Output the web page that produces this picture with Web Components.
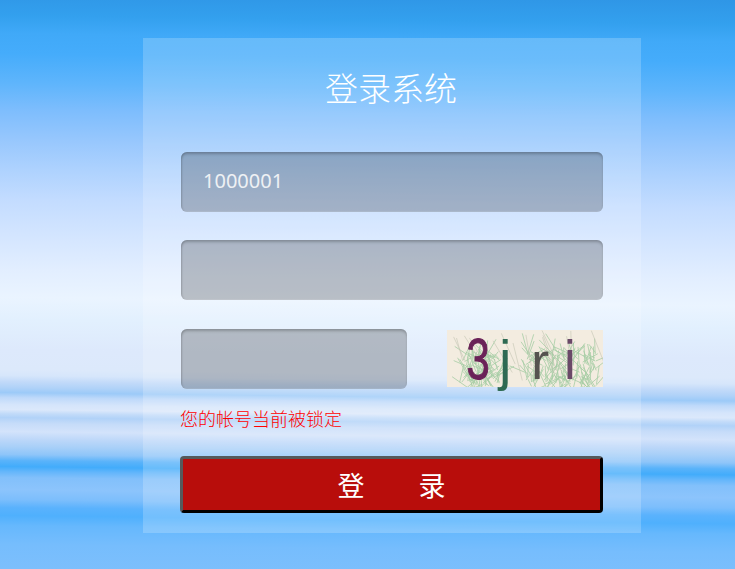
<!DOCTYPE html>
<html lang="zh">
<head>
<meta charset="utf-8">
<title>登录系统</title>
<style>
html,body{margin:0;padding:0;height:100%}
body{font-family:"Noto Sans","Noto Sans CJK SC",sans-serif}
</style>
</head>
<body>
<login-page>
  <login-card>
    <span slot="title">登录系统</span>
    <login-field>1000001</login-field>
    <login-field></login-field>
    <login-captcha-row slot="captcha"></login-captcha-row>
    <span slot="error">您的帐号当前被锁定</span>
    <login-button slot="button">登&emsp;&emsp;录</login-button>
  </login-card>
</login-page>
<script>
function el(html){const t=document.createElement('template');t.innerHTML=html;return t;}
function define(name,html){
  const tpl=el(html);
  customElements.define(name,class extends HTMLElement{
    constructor(){super();this.attachShadow({mode:'open'}).appendChild(tpl.content.cloneNode(true));}
  });
}
define('login-page',`<style>
:host{display:block;box-sizing:border-box;width:735px;height:569px;overflow:hidden;padding:38px 94px 36px 143px;
background:linear-gradient(180.67deg,
#2f96e6 0,#33a0ee 24px,#40a9f8 42px,#45acfb 62px,#5fb5fc 92px,#7dbdfd 118px,#97c7fd 148px,#aed2fe 178px,#c3dcff 208px,#d3e5ff 243px,#e2eeff 278px,#eaf4ff 306px,
#e2f0fe 328px,#dde9fc 358px,#dce9fb 378px,#d6e6fb 384px,#c2daf9 390px,#b0d2f8 396px,#9ccaf8 401px,#bed9fa 406px,#d5e5fb 413px,#dbe8fb 418px,#c2dbf9 422px,#b1d2f8 426px,#c6dcf9 432px,#d3e3fb 440px,#bcd7f9 448px,#a9d0f8 455px,#8ec5f9 463px,#5ab3fa 469px,#42acfb 475px,#64b6fb 480px,#82c0fb 486px,#8cc4fc 498px,#7cbefc 508px,#5ab2fd 516px,#4fb0fd 524px,#66b8fd 534px,#76bdfd 553px,#7cbffc 577px);}
</style><slot></slot>`);
define('login-card',`<style>
:host{display:flex;flex-direction:column;box-sizing:border-box;width:498px;height:495px;padding:0 38px;background:rgba(255,255,255,.2);color:#fff}
.title{font-size:33px;font-weight:300;line-height:46px;text-align:center;padding:26px 2px 42px 0;font-family:"Noto Sans CJK SC",sans-serif}
.fields{display:flex;flex-direction:column;gap:28px}
.gap{height:29px}
.error{margin:16px 0 0 -1px;height:51px;font-size:18px;line-height:26px;color:#f00;font-family:"Noto Sans CJK SC",sans-serif;font-weight:300}
</style>
<div class="title"><slot name="title"></slot></div>
<div class="fields"><slot></slot></div>
<div class="gap"></div>
<slot name="captcha"></slot>
<div class="error"><slot name="error"></slot></div>
<slot name="button"></slot>`);
define('login-field',`<style>
:host{display:flex;align-items:center;box-sizing:border-box;height:60px;padding:0 22px 3px;border-radius:6px;background:rgba(0,0,0,.225);color:#eef1f4;font-size:20px;font-weight:400;
box-shadow:inset 0 3px 3px -1px rgba(0,0,0,.24),inset 2px 0 2px -1px rgba(0,0,0,.14),inset -1px 0 2px -1px rgba(0,0,0,.07),inset 0 -2px 1px -1px rgba(255,255,255,.12);font-family:"Noto Sans",sans-serif}
</style><slot></slot>`);
define('login-button',`<style>
:host{display:flex;align-items:center;justify-content:center;box-sizing:border-box;width:423px;height:57px;margin-left:-1px;border:3px solid;border-color:#555a5c #000 #000 #555a5c;border-radius:4px;background:#b80d0b;color:#fff;font-size:27px;line-height:1;font-family:"Noto Sans CJK SC",sans-serif}
</style><slot></slot>`);
define('login-captcha-row',`<style>
:host{display:flex;align-items:flex-start;justify-content:space-between;height:60px}
.box{width:226px}
login-captcha{margin-top:1px}
</style><login-field class="box"></login-field><login-captcha></login-captcha>`);
customElements.define('login-captcha',class extends HTMLElement{
  constructor(){
    super();
    let s=12345;const r=()=>(s=(s*1664525+1013904223)>>>0)/4294967296;
    let lines='';
    const clusters=[[32,38,110,42,34],[114,36,170,72,40]];
    for(const [cx,cy,n,w,h] of clusters){
      for(let i=0;i<n;i++){
        const a=-Math.PI/2+(r()-.5)*2.4,l=6+r()*16;
        const x=cx+(r()-.5)*w,y=cy+(r()-.5)*h+6;
        lines+=`<line x1="${x.toFixed(1)}" y1="${y.toFixed(1)}" x2="${(x+Math.cos(a)*l).toFixed(1)}" y2="${(y+Math.sin(a)*l).toFixed(1)}" stroke="#a6cda4" stroke-width=".8"/>`;
      }
    }
    for(let i=0;i<14;i++){
      const x=r()*156,y=r()*14;
      lines+=`<line x1="${x.toFixed(1)}" y1="${y.toFixed(1)}" x2="${(x+(r()-.5)*20+10).toFixed(1)}" y2="${(y+18+r()*24).toFixed(1)}" stroke="#c2c4b2" stroke-width=".6"/>`;
    }
    this.attachShadow({mode:'open'}).innerHTML=`<style>
:host{display:block;width:156px;height:57px}
svg{display:block;overflow:visible}
text{font-family:"Liberation Sans",sans-serif}
</style>
<svg width="156" height="57" viewBox="0 0 156 57">
<defs><clipPath id="c"><rect width="156" height="57"/></clipPath><filter id="b" x="-5%" y="-5%" width="110%" height="110%"><feGaussianBlur stdDeviation=".45"/></filter></defs>
<rect width="156" height="57" fill="#f3ece0"/>
<g clip-path="url(#c)"><g filter="url(#b)">${lines}</g></g>
<g filter="url(#b)">
<text transform="translate(19.5 49) scale(.72 1)" font-size="58" fill="#6b2158" stroke="#6b2158" stroke-width="1">3</text>
<text transform="translate(52 49)" font-size="56" fill="#2f6b52">j</text>
<text transform="translate(84 49) scale(1.05 1)" font-size="52" fill="#55534f">r</text>
<text transform="translate(117 49) scale(.95 1)" font-size="56" fill="#6b4a68">i</text>
</g></svg>`;
  }
});
</script>
</body>
</html>
